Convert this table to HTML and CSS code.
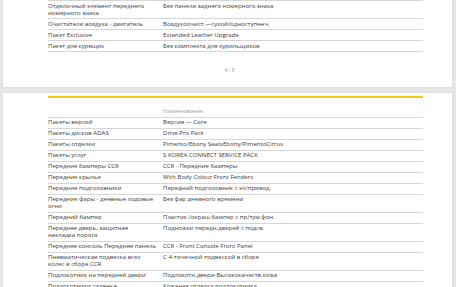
FILE: index.html
```html
<!DOCTYPE html>
<html lang="ru">
<head>
<meta charset="utf-8">
<title>Спецификация</title>
<link rel="stylesheet" href="styles.css">
</head>
<body>
<div class="viewer">
  <section class="page page-first">
    <table class="spec">
      <colgroup><col class="col-name"><col class="col-value"></colgroup>
      <tbody>
        <tr><td>Отделочный элемент переднего номерного знака</td><td>Без панели заднего номерного знака</td></tr>
        <tr><td>Очистители воздуха - двигатель</td><td>Воздухоочист.—сухой/одноступенч.</td></tr>
        <tr><td>Пакет Exclusive</td><td>Extended Leather Upgrade</td></tr>
        <tr><td>Пакет для курящих</td><td>Без комплекта для курильщиков</td></tr>
      </tbody>
    </table>
    <div class="page-num">4 / 8</div>
  </section>
  <section class="page page-second">
    <div class="accent"></div>
    <table class="spec">
      <colgroup><col class="col-name"><col class="col-value"></colgroup>
      <thead>
        <tr><th></th><th>Наименование</th></tr>
      </thead>
      <tbody>
        <tr><td>Пакеты версий</td><td>Версия — Core</td></tr>
        <tr><td>Пакеты дисков ADAS</td><td>Drive Pro Pack</td></tr>
        <tr><td>Пакеты отделки</td><td>Pimento/Ebony SeatsEbony/PimentoCirrus</td></tr>
        <tr><td>Пакеты услуг</td><td>S KOREA CONNECT SERVICE PACK</td></tr>
        <tr><td>Передние бамперы CCR</td><td>CCR - Передние бамперы</td></tr>
        <tr><td>Передние крылья</td><td>With Body Colour Front Fenders</td></tr>
        <tr><td>Передние подголовники</td><td>Передний подголовник с эл/привод.</td></tr>
        <tr><td>Передние фары - дневные ходовые огни</td><td>Без фар дневного времени</td></tr>
        <tr><td>Передний бампер</td><td>Пластик./окраш.бампер с пр/тум.фон.</td></tr>
        <tr><td>Передняя дверь, защитная накладка порога</td><td>Подножки передн.дверей с подсв.</td></tr>
        <tr><td>Передняя консоль Передняя панель</td><td>CCR - Front Console Front Panel</td></tr>
        <tr><td>Пневматическая подвеска всех колес в сборе CCR</td><td>С 4-точечной подвеской в сборе</td></tr>
        <tr><td>Подлокотник на передней двери</td><td>Подлокотн.двери-Высококачеств.кожа</td></tr>
        <tr><td>Подлокотники сиденья</td><td>Кожаная отделка подлокотника</td></tr>
      </tbody>
    </table>
  </section>
</div>
</body>
</html>
```
FILE: styles.css
```css
html, body {
  margin: 0;
  padding: 0;
}
body {
  background: #e6e6e9;
  font-family: "Open Sans", "Liberation Sans", sans-serif;
  color: #3a3a3a;
  overflow: hidden;
}
.viewer {
  display: flex;
  flex-direction: column;
  gap: 6px;
  padding: 0 4px 0 3px;
}
.page {
  background: #ffffff;
  box-shadow: 0 0 1px rgba(0, 0, 0, 0.18);
  padding: 0 29px 0 45px;
}
.page-first {
  height: 87px;
  box-sizing: border-box;
  display: flex;
  flex-direction: column;
}
.page-second {
  padding-top: 3px;
  height: 220px;
}
.spec {
  width: 375px;
  border-collapse: collapse;
  table-layout: fixed;
  font-size: 6.05px;
  line-height: 7px;
}
.col-name {
  width: 115px;
}
.spec td {
  padding: 1.5px 3px 1.5px 0;
  vertical-align: top;
  border-bottom: 1px solid #d6d6d6;
}
.spec td:first-child {
  padding-right: 7px;
}
.page-first .spec {
  border-top: 1px solid #d6d6d6;
}
.spec th {
  text-align: left;
  font-weight: 400;
  color: #a3a3a3;
  font-size: 5.4px;
  padding: 10px 0 1.5px 0;
  line-height: 7px;
  border-bottom: 1px solid #d6d6d6;
}
.page-num {
  margin-top: auto;
  margin-bottom: 14px;
  text-align: center;
  font-size: 5px;
  color: #9a9a9a;
  width: 375px;
  padding-right: 12px;
  box-sizing: border-box;
}
.accent {
  width: 375px;
  height: 2px;
  background: #f6c915;
}
```
